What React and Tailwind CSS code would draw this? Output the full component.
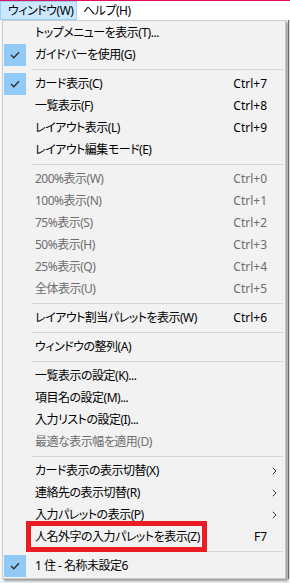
import React from 'react'

const items = [
  { label: 'トップメニューを表示(T)...' },
  { label: 'ガイドバーを使用(G)', check: true },
  { sep: true },
  { label: 'カード表示(C)', check: true, key: 'Ctrl+7' },
  { label: '一覧表示(F)', key: 'Ctrl+8' },
  { label: 'レイアウト表示(L)', key: 'Ctrl+9' },
  { label: 'レイアウト編集モード(E)' },
  { sep: true },
  { label: '200%表示(W)', key: 'Ctrl+0', off: true },
  { label: '100%表示(N)', key: 'Ctrl+1', off: true },
  { label: '75%表示(S)', key: 'Ctrl+2', off: true },
  { label: '50%表示(H)', key: 'Ctrl+3', off: true },
  { label: '25%表示(Q)', key: 'Ctrl+4', off: true },
  { label: '全体表示(U)', key: 'Ctrl+5', off: true },
  { sep: true },
  { label: 'レイアウト割当パレットを表示(W)', key: 'Ctrl+6' },
  { sep: true },
  { label: 'ウィンドウの整列(A)' },
  { sep: true },
  { label: '一覧表示の設定(K)...' },
  { label: '項目名の設定(M)...' },
  { label: '入力リストの設定(I)...' },
  { label: '最適な表示幅を適用(D)', off: true },
  { sep: true },
  { label: 'カード表示の表示切替(X)', sub: true },
  { label: '連絡先の表示切替(R)', sub: true },
  { label: '入力パレットの表示(P)', sub: true },
  { label: '人名外字の入力パレットを表示(Z)', key: 'F7', boxed: true },
  { sep: true },
  { label: '1 住 - 名称未設定6', check: true },
]

function Check() {
  return (
    <span className="ml-[1px] grid h-[22px] w-[22px] place-items-center bg-[#91c9f7]">
      <svg width="10" height="8" viewBox="0 0 10 8">
        <path d="M1 4 L3.8 6.8 L9 1.2" fill="none" stroke="#2b2b2b" strokeWidth="1.3" />
      </svg>
    </span>
  )
}

function Arrow() {
  return (
    <svg width="5" height="8" viewBox="0 0 5 8" className="ml-[5px]">
      <path d="M0.8 0.8 L4 4 L0.8 7.2" fill="none" stroke="#333" strokeWidth="1" />
    </svg>
  )
}

function Row({ it }) {
  if (it.sep) {
    return (
      <div className="flex h-[7px] items-center">
        <div className="ml-[29px] mr-[2px] h-px flex-1 bg-[#d5d5d5]" />
      </div>
    )
  }
  return (
    <div className={`relative flex h-[22px] items-center ${it.off ? 'text-[#6d6d6d]' : 'text-black'}`}>
      <div className="flex w-[32px] items-center">{it.check ? <Check /> : null}</div>
      <span className="flex-1 whitespace-nowrap">{it.label}</span>
      {it.key ? <span className="whitespace-nowrap text-right tracking-normal">{it.key}</span> : null}
      <div className="flex w-[18px] items-center">{it.sub ? <Arrow /> : null}</div>
      {it.boxed ? (
        <div className="pointer-events-none absolute left-[23px] top-[-5px] h-[31px] w-[181px] border-[5px] border-[#ec1c24]" />
      ) : null}
    </div>
  )
}

export default function App() {
  return (
    <div
      className="h-[583px] w-[290px] overflow-hidden bg-[#f0f0f0] text-[12px] leading-none tracking-[-0.5px] [font-feature-settings:'palt']"
      style={{ fontFamily: '"Noto Sans", "Noto Sans CJK JP", sans-serif' }}
    >
      {/* menu bar */}
      <div className="flex h-[20px] items-stretch whitespace-nowrap border-t border-[#e0135a] bg-white">
        <div className="flex w-[77px] items-center border border-[#99d1ff] bg-[#cce8ff] pl-[7px]">ウィンドウ(W)</div>
        <div className="flex items-center pl-[6px]">ヘルプ(H)</div>
      </div>

      <div className="flex">
        <div className="w-[2px] bg-[#f7f7f7]" />
        <div className="w-[284px] border border-[#cccccc] bg-[#f2f2f2] py-[1px] shadow-[2px_2px_2px_rgba(0,0,0,0.35)]">
          {items.map((it, i) => (
            <Row key={i} it={it} />
          ))}
        </div>
        <div className="ml-[2px] flex-1 border-l border-[#6a6a6a] bg-[#dcdcdc]" />
      </div>
    </div>
  )
}
